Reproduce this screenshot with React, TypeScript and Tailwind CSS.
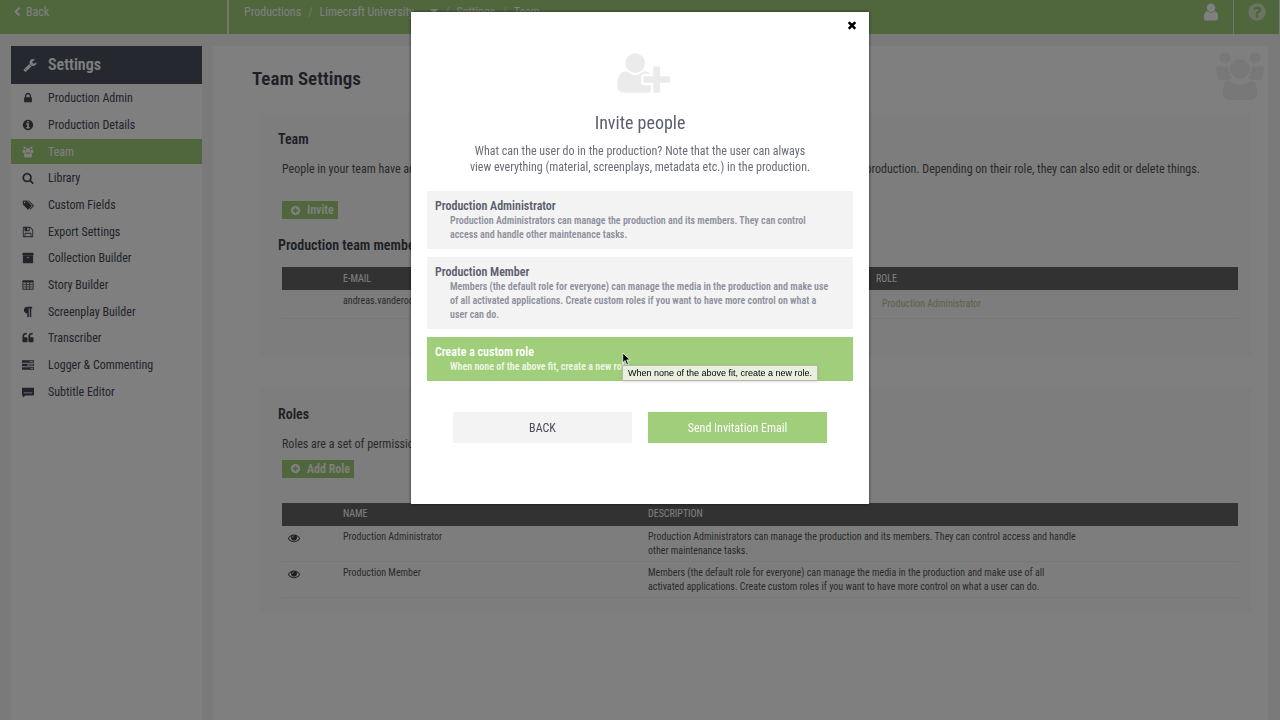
import React, { useState } from "react";

const ICONS = {
  user: "M1536 1399q0 109-62.5 187t-150.5 78h-854q-88 0-150.5-78t-62.5-187q0-85 8.5-160.5t31.5-152 58.5-131 94-89 134.5-34.5q131 128 313 128t313-128q76 0 134.5 34.5t94 89 58.5 131 31.5 152 8.5 160.5zm-256-887q0 159-112.5 271.5t-271.5 112.5-271.5-112.5-112.5-271.5 112.5-271.5 271.5-112.5 271.5 112.5 112.5 271.5z",
  plus: "M1344 960v-128q0-26-19-45t-45-19h-256v-256q0-26-19-45t-45-19h-128q-26 0-45 19t-19 45v256h-256q-26 0-45 19t-19 45v128q0 26 19 45t45 19h256v256q0 26 19 45t45 19h128q26 0 45-19t19-45v-256h256q26 0 45-19t19-45zm320-64q0 209-103 385.5t-279.5 279.5-385.5 103-385.5-103-279.5-279.5-103-385.5 103-385.5 279.5-279.5 385.5-103 385.5 103 279.5 279.5 103 385.5z",
  lock: "M640 768h512v-192q0-106-75-181t-181-75-181 75-75 181v192zm832 96v576q0 40-28 68t-68 28h-960q-40 0-68-28t-28-68v-576q0-40 28-68t68-28h32v-192q0-184 132-316t316-132 316 132 132 316v192h32q40 0 68 28t28 68z",
  users: "M3.500 8a5.500 5.500 0 1 0 11 0a5.500 5.500 0 1 0-11 0zM33.500 8a5.500 5.500 0 1 0 11 0a5.500 5.500 0 1 0-11 0zM14 19a10 10 0 1 0 20 0a10 10 0 1 0-20 0zM0 18q2-3 4-2q4 2 8 0q0 7 4 12q-2 2-5 2H4q-4-1-4-12zM48 18q-2-3-4-2q-4 2-8 0q0 7-4 12q2 2 5 2h7q4-1 4-12zM8 34q2-4 6-3q10 7 20 0q4-1 6 3q1 4 1 9q0 7-6 7H13q-6 0-6-7q0-5 1-9z",
  search: "M1216 832q0-185-131.5-316.5t-316.5-131.5-316.5 131.5-131.5 316.5 131.5 316.5 316.5 131.5 316.5-131.5 131.5-316.5zm512 832q0 52-38 90t-90 38q-54 0-90-38l-343-342q-179 124-399 124-143 0-273.5-55.5t-225-150-150-225-55.5-273.5 55.5-273.5 150-225 225-150 273.5-55.5 273.5 55.5 225 150 150 225 55.5 273.5q0 220-124 399l343 343q37 37 37 90z",
  info: "M1152 1376v-160q0-14-9-23t-23-9h-96v-512q0-14-9-23t-23-9h-320q-14 0-23 9t-9 23v160q0 14 9 23t23 9h96v320h-96q-14 0-23 9t-9 23v160q0 14 9 23t23 9h448q14 0 23-9t9-23zm-128-896v-160q0-14-9-23t-23-9h-192q-14 0-23 9t-9 23v160q0 14 9 23t23 9h192q14 0 23-9t9-23zm640 416q0 209-103 385.5t-279.5 279.5-385.5 103-385.5-103-279.5-279.5-103-385.5 103-385.5 279.5-279.5 385.5-103 385.5 103 279.5 279.5 103 385.5z",
  wrench: "M448 1472q0-26-19-45t-45-19-45 19-19 45 19 45 45 19 45-19 19-45zm644-420l-682 682q-37 37-90 37-52 0-91-37l-106-108q-38-36-38-90 0-53 38-91l681-681q39 98 114.5 173.5t173.5 114.5zm634-435q0 39-23 106-47 134-164.5 217.5t-258.5 83.5q-185 0-316.5-131.5t-131.5-316.5 131.5-316.5 316.5-131.5q58 0 121.5 16.5t107.5 46.5q16 11 16 28t-16 28l-293 169v224l193 107q5-3 79-48.5t135.5-81 70.5-35.5q15 0 23.5 10t8.5 25z",
  eye: "M1664 960q-152-236-381-353 61 104 61 225 0 185-131.5 316.5t-316.5 131.5-316.5-131.5-131.5-316.5q0-121 61-225-229 117-381 353 133 205 333.5 326.5t434.5 121.5 434.5-121.5 333.5-326.5zm-720-384q0-20-14-34t-34-14q-125 0-214.5 89.5t-89.5 214.5q0 20 14 34t34 14 34-14 14-34q0-86 61-147t147-61q20 0 34-14t14-34zm848 384q0 34-20 69-140 230-376.5 368.5t-499.5 138.5-499.5-139-376.5-368q-20-35-20-69t20-69q140-229 376.5-368t499.5-139 499.5 139 376.5 368q20 35 20 69z",
  archive: "M1088 832q0-26-19-45t-45-19h-256q-26 0-45 19t-19 45 19 45 45 19h256q26 0 45-19t19-45zm576-192v960q0 26-19 45t-45 19h-1408q-26 0-45-19t-19-45v-960q0-26 19-45t45-19h1408q26 0 45 19t19 45zm64-448v256q0 26-19 45t-45 19h-1536q-26 0-45-19t-19-45v-256q0-26 19-45t45-19h1536q26 0 45 19t19 45z",
  userPlus: "M704 896q-159 0-271.5-112.5t-112.5-271.5 112.5-271.5 271.5-112.5 271.5 112.5 112.5 271.5-112.5 271.5-271.5 112.5zm960 128h352q13 0 22.5 9.5t9.5 22.5v192q0 13-9.5 22.5t-22.5 9.5h-352v352q0 13-9.5 22.5t-22.5 9.5h-192q-13 0-22.5-9.5t-9.5-22.5v-352h-352q-13 0-22.5-9.5t-9.5-22.5v-192q0-13 9.5-22.5t22.5-9.5h352v-352q0-13 9.5-22.5t22.5-9.5h192q13 0 22.5 9.5t9.5 22.5v352zm-736 224q0 52 38 90t90 38h256v238q-68 50-171 50h-874q-121 0-194-69t-73-190q0-53 3.5-103.5t14-109 26.5-108.5 43-97.5 62-81 85.5-53.5 111.5-20q19 0 39 17 79 61 154.5 91.5t164.5 30.5 164.5-30.5 154.5-91.5q20-17 39-17 132 0 217 96h-223q-52 0-90 38t-38 90v192z",
  question: "M1024 1376v-192q0-14-9-23t-23-9h-192q-14 0-23 9t-9 23v192q0 14 9 23t23 9h192q14 0 23-9t9-23zm256-672q0-88-55.5-163t-138.5-116-170-41q-243 0-371 213-15 24 8 42l132 100q7 6 19 6 16 0 25-12 53-68 86-92 34-24 86-24 48 0 85.5 26t37.5 59q0 38-20 61t-68 45q-63 28-115.5 86.5t-52.5 125.5v36q0 14 9 23t23 9h192q14 0 23-9t9-23q0-19 21.5-49.5t54.5-49.5q32-18 49-28.5t46-35 44.5-48 28-60.5 12.5-81zm384 192q0 209-103 385.5t-279.5 279.5-385.5 103-385.5-103-279.5-279.5-103-385.5 103-385.5 279.5-279.5 385.5-103 385.5 103 279.5 279.5 103 385.5z",
  tags: "M576 448q0-53-37.5-90.5t-90.5-37.5-90.5 37.5-37.5 90.5 37.5 90.5 90.5 37.5 90.5-37.5 37.5-90.5zm1067 576q0 53-37 90l-491 492q-39 37-91 37-53 0-90-37l-715-716q-38-37-64.5-101t-26.5-117v-416q0-52 38-90t90-38h416q53 0 117 26.5t102 64.5l715 714q37 39 37 91zm384 0q0 53-37 90l-491 492q-39 37-91 37-36 0-59-14t-53-45l470-470q37-37 37-90 0-52-37-91l-715-714q-38-38-102-64.5t-117-26.5h224q53 0 117 26.5t102 64.5l715 714q37 39 37 91z",
  save: "M512 1536h768v-384h-768v384zm896 0h128v-896q0-14-10-38.5t-20-34.5l-281-281q-10-10-34-20t-39-10v416q0 40-28 68t-68 28h-576q-40 0-68-28t-28-68v-416h-128v1280h128v-416q0-40 28-68t68-28h832q40 0 68 28t28 68v416zm-384-928v-320q0-13-9.5-22.5t-22.5-9.5h-192q-13 0-22.5 9.5t-9.5 22.5v320q0 13 9.5 22.5t22.5 9.5h192q13 0 22.5-9.5t9.5-22.5zm640 32v928q0 40-28 68t-68 28h-1344q-40 0-68-28t-28-68v-1344q0-40 28-68t68-28h928q40 0 88 20t76 48l280 280q28 28 48 76t20 88z",
  table: "M160 192h1472q96 0 96 96v1216q0 96-96 96h-1472q-96 0-96-96v-1216q0-96 96-96zm32 320v256h384v-256zm512 0v256h384v-256zm512 0v256h384v-256zm-1024 384v224h384v-224zm512 0v224h384v-224zm512 0v224h384v-224zm-1024 352v224h384v-224zm512 0v224h384v-224zm512 0v224h384v-224z",
  paragraph: "M1534 189v73q0 29-18.5 61t-42.5 32q-50 0-54 1-26 6-32 31-3 11-3 64v1152q0 25-18 43t-43 18h-108q-25 0-43-18t-18-43v-1218h-143v1218q0 25-17.5 43t-43.5 18h-108q-26 0-43.5-18t-17.5-43v-496q-147-12-245-59-126-58-192-179-64-117-64-259 0-166 88-286 88-118 209-159 111-37 417-37h479q25 0 43 18t18 43z",
  quote: "M832 960v384q0 80-56 136t-136 56h-384q-80 0-136-56t-56-136v-704q0-104 40.5-198.5t109.5-163.5 163.5-109.5 198.5-40.5h64q26 0 45 19t19 45v128q0 26-19 45t-45 19h-64q-106 0-181 75t-75 181v32q0 40 28 68t68 28h224q80 0 136 56t56 136zm896 0v384q0 80-56 136t-136 56h-384q-80 0-136-56t-56-136v-704q0-104 40.5-198.5t109.5-163.5 163.5-109.5 198.5-40.5h64q26 0 45 19t19 45v128q0 26-19 45t-45 19h-64q-106 0-181 75t-75 181v32q0 40 28 68t68 28h224q80 0 136 56t56 136z",
  tasks: "M0 192h1792v384h-1792zm1152 128v128h512v-128zm-1152 384h1792v384h-1792zm768 128v128h896v-128zm-768 384h1792v384h-1792zm1280 128v128h384v-128z",
  subtitle: "M64 256h1664q64 0 64 64v1024q0 64-64 64h-1216l-384 320v-320h-64q-64 0-64-64v-1024q0-64 64-64zm192 704v128h1280v-128z",
  close: "M1490 1322q0 40-28 68l-136 136q-28 28-68 28t-68-28l-294-294-294 294q-28 28-68 28t-68-28l-136-136q-28-28-28-68t28-68l294-294-294-294q-28-28-28-68t28-68l136-136q28-28 68-28t68 28l294 294 294-294q28-28 68-28t68 28l136 136q28 28 28 68t-28 68l-294 294 294 294q28 28 28 68z",
  back: "M1427 301l-531 531 531 531q19 19 19 45t-19 45l-166 166q-19 19-45 19t-45-19l-742-742q-19-19-19-45t19-45l742-742q19-19 45-19t45 19l166 166q19 19 19 45t-19 45z",
};

type IconName = keyof typeof ICONS;

const VIEW_BOXES: Partial<Record<IconName, string>> = {
  users: "0 0 48 52",
  tags: "0 0 2048 1792",
  userPlus: "0 0 2048 1792",
};

function Icon({ name, className }: { name: IconName; className: string }) {
  return (
    <svg viewBox={VIEW_BOXES[name] ?? "0 0 1792 1792"} fill="currentColor" className={className} aria-hidden="true">
      <path fillRule="evenodd" d={ICONS[name]} />
    </svg>
  );
}

const MENU: { icon: IconName; label: string }[] = [
  { icon: "lock", label: "Production Admin" },
  { icon: "info", label: "Production Details" },
  { icon: "users", label: "Team" },
  { icon: "search", label: "Library" },
  { icon: "tags", label: "Custom Fields" },
  { icon: "save", label: "Export Settings" },
  { icon: "archive", label: "Collection Builder" },
  { icon: "table", label: "Story Builder" },
  { icon: "paragraph", label: "Screenplay Builder" },
  { icon: "quote", label: "Transcriber" },
  { icon: "tasks", label: "Logger & Commenting" },
  { icon: "subtitle", label: "Subtitle Editor" },
];

const ROLES = [
  {
    name: "Production Administrator",
    description:
      "Production Administrators can manage the production and its members. They can control access and handle other maintenance tasks.",
  },
  {
    name: "Production Member",
    description:
      "Members (the default role for everyone) can manage the media in the production and make use of all activated applications. Create custom roles if you want to have more control on what a user can do.",
  },
];

const CUSTOM_ROLE = {
  name: "Create a custom role",
  description: "When none of the above fit, create a new role.",
};

function TopBar() {
  return (
    <header className="flex h-[34px] mr-px bg-[#a0ce7a] text-white text-xs">
      <div className="w-[227px] shrink-0 pl-3 pb-[11px] flex items-center">
        <a href="#back" className="flex items-center gap-1">
          <Icon name="back" className="w-[10px] h-[10px]" />
          Back
        </a>
      </div>
      <nav aria-label="Breadcrumb" className="flex-1 flex items-center pl-[15px] pb-[11px] border-l-2 border-[#e3f0d8]">
        <a href="#productions">Productions</a>
        <span className="px-[7px] opacity-60">/</span>
        <a href="#university">Limecraft University</a>
        <svg viewBox="0 0 8 5" className="w-2 h-[5px] ml-4" fill="currentColor" aria-hidden="true">
          <path d="M0 0h8L4 5z" />
        </svg>
        <span className="px-[7px] opacity-60">/</span>
        <a href="#settings">Settings</a>
        <span className="px-[7px] opacity-60">/</span>
        <a href="#team">Team</a>
      </nav>
      <button type="button" aria-label="Account" className="pr-3 pb-[10px]">
        <Icon name="user" className="w-5 h-5" />
      </button>
      <button type="button" aria-label="Help" className="w-[46px] pb-[10px] flex items-center justify-center border-l border-[#e3f0d8]">
        <Icon name="question" className="w-5 h-5 opacity-60" />
      </button>
    </header>
  );
}

function Sidebar() {
  return (
    <aside className="w-[191px] shrink-0 bg-white">
      <h2 className="flex items-center h-[38px] pl-3 bg-[#4a505e] text-white text-base font-semibold">
        <Icon name="wrench" className="w-[14px] h-[14px] mr-[11px]" />
        Settings
      </h2>
      <ul className="grid auto-rows-fr gap-[2px] mt-[2px] h-[318px] text-xs">
        {MENU.map((item) => (
          <li key={item.label}>
            <a
              href="#settings"
              className={`flex items-center h-full pl-[11px] ${item.label === "Team" ? "bg-[#a0ce7a] text-white" : "text-[#444855]"}`}
            >
              <Icon name={item.icon} className="w-3 h-3 mr-[14px]" />
              {item.label}
            </a>
          </li>
        ))}
      </ul>
    </aside>
  );
}

function AddButton({ label }: { label: string }) {
  return (
    <button type="button" className="flex items-center h-[18px] ml-1 pl-2 pr-1 gap-[6px] bg-[#a0ce7a] text-white text-xs font-semibold">
      <Icon name="plus" className="w-[11px] h-[11px]" />
      {label}
    </button>
  );
}

function TeamCard() {
  return (
    <section className="mt-[22px] ml-[47px] mr-[17px] pt-4 pl-[18px] pr-[13px] pb-[37px] bg-[#fafafa]">
      <h3 className="text-sm leading-5 font-semibold text-[#3c404c]">Team</h3>
      <p className="mt-3 ml-1 text-xs leading-4 whitespace-nowrap">
        People in your team have access to the production and everything that is in it. They can always see all of the material in the
        production. Depending on their role, they can also edit or delete things.
      </p>
      <div className="mt-6">
        <AddButton label="Invite" />
      </div>
      <h3 className="mt-4 text-sm leading-5 font-semibold text-[#3c404c]">Production team members</h3>
      <div className="mt-3 pl-1">
        <table className="w-full table-fixed text-left text-[10px] leading-[14px]">
          <thead className="bg-[#646464] text-white">
            <tr className="h-[23px]">
              <th className="w-[61px]" aria-label="Actions" />
              <th className="w-[533px] font-normal">E-MAIL</th>
              <th className="font-normal">ROLE</th>
            </tr>
          </thead>
          <tbody>
            <tr className="h-7 border-b border-[#efefef] align-top">
              <td />
              <td className="pt-1">andreas.vanderoost</td>
              <td className="pt-[7px] pl-[6px]">
                <a href="#role" className="text-[#b4c890]">Production Administrator</a>
              </td>
            </tr>
          </tbody>
        </table>
      </div>
    </section>
  );
}

function RolesCard() {
  return (
    <section className="mt-8 ml-[47px] mr-[17px] pt-4 pl-[18px] pr-[13px] pb-[14px] bg-[#fafafa]">
      <h3 className="text-sm leading-5 font-semibold text-[#3c404c]">Roles</h3>
      <p className="mt-3 ml-1 text-xs leading-4">Roles are a set of permissions</p>
      <div className="mt-2">
        <AddButton label="Add Role" />
      </div>
      <div className="mt-[25px] pl-1">
        <table className="w-full table-fixed text-left text-[10px] leading-[14px]">
          <thead className="bg-[#646464] text-white">
            <tr className="h-[23px]">
              <th className="w-[61px]" aria-label="Actions" />
              <th className="w-[305px] font-normal">NAME</th>
              <th className="font-normal">DESCRIPTION</th>
            </tr>
          </thead>
          <tbody>
            {ROLES.map((role) => (
              <tr key={role.name} className="border-b border-[#efefef] align-top">
                <td className="pt-[6px] pl-[6px]">
                  <button type="button" aria-label={`View ${role.name}`} className="block text-[#3c404c]">
                    <Icon name="eye" className="w-3 h-3" />
                  </button>
                </td>
                <td className="pt-1">{role.name}</td>
                <td className="pt-1 pb-[3px]">
                  <p className="max-w-[432px]">{role.description}</p>
                </td>
              </tr>
            ))}
          </tbody>
        </table>
      </div>
    </section>
  );
}

type RoleOptionProps = {
  name: string;
  description: string;
  active: boolean;
  onSelect: () => void;
  children?: React.ReactNode;
};

function RoleOption({ name, description, active, onSelect, children }: RoleOptionProps) {
  return (
    <div className="relative">
      <button
        type="button"
        onClick={onSelect}
        aria-pressed={active}
        className={`block w-full py-[7px] pl-2 pr-[18px] text-left font-semibold ${active ? "bg-[#a0ce7a] text-white" : "bg-[#f3f3f3] text-[#5a5e6e]"}`}
      >
        <span className="block text-xs leading-4">{name}</span>
        <span className={`block pl-[15px] text-[10px] leading-[14px] ${active ? "text-[#eef7e6]" : "text-[#8d909c]"}`}>{description}</span>
      </button>
      {children}
    </div>
  );
}

function InviteDialog() {
  const [selected, setSelected] = useState(CUSTOM_ROLE.name);

  return (
    <div className="fixed inset-0 flex items-start justify-center pt-3 bg-black/50">
      <div
        role="dialog"
        aria-modal="true"
        aria-labelledby="invite-title"
        className="relative w-full max-w-[458px] px-4 pt-[38px] pb-[61px] bg-white shadow-[0_0_3px_rgba(0,0,0,0.6)]"
      >
        <button type="button" aria-label="Close" className="absolute top-[7px] right-[11px] text-black">
          <Icon name="close" className="w-3 h-3" />
        </button>
        <div className="flex justify-center pl-[6px]">
          <Icon name="userPlus" className="w-[53px] h-[46px] text-[#ebebeb]" />
        </div>
        <h2 id="invite-title" className="mt-[15px] text-lg leading-6 text-center text-[#5a5e6e]">Invite people</h2>
        <p className="mt-2 mx-auto max-w-[352px] text-xs leading-4 text-center text-[#6a6d78]">
          What can the user do in the production? Note that the user can always view everything (material, screenplays, metadata etc.) in
          the production.
        </p>

        <div className="mt-4 space-y-2">
          {ROLES.map((role) => (
            <RoleOption key={role.name} {...role} active={selected === role.name} onSelect={() => setSelected(role.name)} />
          ))}
          <RoleOption {...CUSTOM_ROLE} active={selected === CUSTOM_ROLE.name} onSelect={() => setSelected(CUSTOM_ROLE.name)}>
            {/* Pointer and its tooltip */}
            <svg viewBox="0 0 12 18" className="absolute left-[195px] top-[15px] w-[9px] h-[14px]" aria-hidden="true">
              <path d="M1 1v13l3-3 2.200 5.500 2.400-1-2.200-5.300H11z" fill="#000" stroke="#fff" strokeWidth="1" />
            </svg>
            <div
              role="tooltip"
              className="absolute left-[195px] top-7 h-4 px-[5px] border border-[#b3b9ab] bg-[#e9efdf] text-black text-[9px] leading-[14px] whitespace-nowrap font-['Liberation_Sans',sans-serif] shadow-sm"
            >
              {CUSTOM_ROLE.description}
            </div>
          </RoleOption>
        </div>

        <div className="mt-[31px] px-[26px] grid grid-cols-2 gap-4 text-xs">
          <button type="button" className="h-[31px] bg-[#f3f3f3] text-[#4a4d58]">BACK</button>
          <button type="button" className="h-[31px] bg-[#a0ce7a] text-white">Send Invitation Email</button>
        </div>
      </div>
    </div>
  );
}

export default function App() {
  return (
    <div className="min-h-screen flex flex-col bg-[#f4f4f4] text-[#555555] font-['Roboto_Condensed','Roboto',sans-serif]">
      <TopBar />
      <div className="flex-1 flex gap-[11px] pt-3 pl-[11px] pr-3">
        <Sidebar />
        <main className="relative flex-1 min-w-0 pt-[21px] bg-white">
          <h1 className="ml-[39px] text-[19px] leading-6 font-semibold text-[#3c404c]">Team Settings</h1>
          <Icon name="users" className="absolute top-1 right-1 w-12 h-[52px] text-[#f1f1f1]" />
          <TeamCard />
          <RolesCard />
        </main>
      </div>
      <InviteDialog />
    </div>
  );
}
